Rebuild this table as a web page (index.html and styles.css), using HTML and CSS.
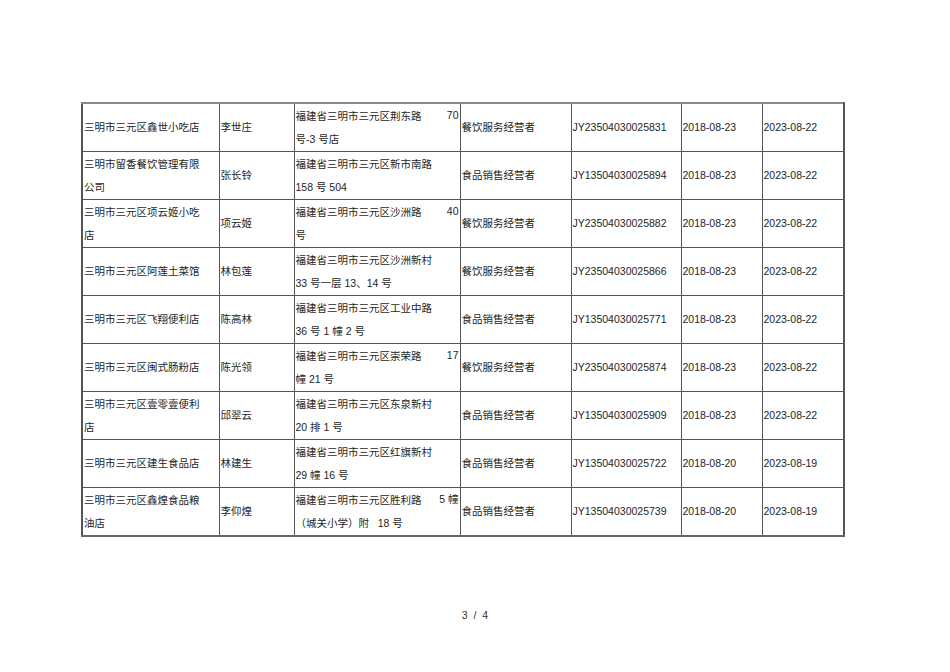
FILE: index.html
```html
<!DOCTYPE html>
<html lang="zh-CN">
<head>
<meta charset="utf-8">
<title>3 / 4</title>
<link rel="stylesheet" href="styles.css">
</head>
<body>
<div class="page">
  <table class="grid">
    <colgroup>
      <col class="c1"><col class="c2"><col class="c3"><col class="c4"><col class="c5"><col class="c6"><col class="c7">
    </colgroup>
    <tbody>
      <tr>
        <td>三明市三元区鑫世小吃店</td>
        <td>李世庄</td>
        <td class="addr"><div class="l1"><span>福建省三明市三元区荆东路</span><span class="num">70</span></div><div>号-3 号店</div></td>
        <td>餐饮服务经营者</td>
        <td>JY23504030025831</td>
        <td>2018-08-23</td>
        <td>2023-08-22</td>
      </tr>
      <tr>
        <td>三明市留香餐饮管理有限<br>公司</td>
        <td>张长铃</td>
        <td class="addr"><div class="l1"><span>福建省三明市三元区新市南路</span></div><div>158 号 504</div></td>
        <td>食品销售经营者</td>
        <td>JY13504030025894</td>
        <td>2018-08-23</td>
        <td>2023-08-22</td>
      </tr>
      <tr>
        <td>三明市三元区项云姬小吃<br>店</td>
        <td>项云姬</td>
        <td class="addr"><div class="l1"><span>福建省三明市三元区沙洲路</span><span class="num">40</span></div><div>号</div></td>
        <td>餐饮服务经营者</td>
        <td>JY23504030025882</td>
        <td>2018-08-23</td>
        <td>2023-08-22</td>
      </tr>
      <tr>
        <td>三明市三元区阿莲土菜馆</td>
        <td>林包莲</td>
        <td class="addr"><div class="l1"><span>福建省三明市三元区沙洲新村</span></div><div>33 号一层 13、14 号</div></td>
        <td>餐饮服务经营者</td>
        <td>JY23504030025866</td>
        <td>2018-08-23</td>
        <td>2023-08-22</td>
      </tr>
      <tr>
        <td>三明市三元区飞翔便利店</td>
        <td>陈高林</td>
        <td class="addr"><div class="l1"><span>福建省三明市三元区工业中路</span></div><div>36 号 1 幢 2 号</div></td>
        <td>食品销售经营者</td>
        <td>JY13504030025771</td>
        <td>2018-08-23</td>
        <td>2023-08-22</td>
      </tr>
      <tr>
        <td>三明市三元区闽式肠粉店</td>
        <td>陈光领</td>
        <td class="addr"><div class="l1"><span>福建省三明市三元区崇荣路</span><span class="num">17</span></div><div>幢 21 号</div></td>
        <td>餐饮服务经营者</td>
        <td>JY23504030025874</td>
        <td>2018-08-23</td>
        <td>2023-08-22</td>
      </tr>
      <tr>
        <td>三明市三元区壹零壹便利<br>店</td>
        <td>邱翠云</td>
        <td class="addr"><div class="l1"><span>福建省三明市三元区东泉新村</span></div><div>20 排 1 号</div></td>
        <td>食品销售经营者</td>
        <td>JY13504030025909</td>
        <td>2018-08-23</td>
        <td>2023-08-22</td>
      </tr>
      <tr>
        <td>三明市三元区建生食品店</td>
        <td>林建生</td>
        <td class="addr"><div class="l1"><span>福建省三明市三元区红旗新村</span></div><div>29 幢 16 号</div></td>
        <td>食品销售经营者</td>
        <td>JY13504030025722</td>
        <td>2018-08-20</td>
        <td>2023-08-19</td>
      </tr>
      <tr>
        <td>三明市三元区鑫煌食品粮<br>油店</td>
        <td>李仰煌</td>
        <td class="addr"><div class="l1"><span>福建省三明市三元区胜利路</span><span class="num">5 幢</span></div><div>（城关小学）附&nbsp;&nbsp;&nbsp;18 号</div></td>
        <td>食品销售经营者</td>
        <td>JY13504030025739</td>
        <td>2018-08-20</td>
        <td>2023-08-19</td>
      </tr>
    </tbody>
  </table>
  <div class="footer">3 &nbsp;/ &nbsp;4</div>
</div>
</body>
</html>
```
FILE: styles.css
```css
html, body {
  margin: 0;
  padding: 0;
  background: #ffffff;
}

.page {
  width: 950px;
  height: 672px;
  padding: 102px 0 0 81px;
  box-sizing: border-box;
  font-family: "Liberation Sans", "Noto Sans CJK SC", sans-serif;
  font-size: 10.5px;
  color: #1e1e1e;
}

.grid {
  border-collapse: collapse;
  table-layout: fixed;
  width: 762px;
}

.c1 { width: 137px; }
.c2 { width: 75px; }
.c3 { width: 166px; }
.c4 { width: 111px; }
.c5 { width: 110px; }
.c6 { width: 81px; }
.c7 { width: 82px; }

.grid td {
  border: 1px solid #555555;
  height: 47px;
  padding: 0 1px;
  line-height: 23px;
  vertical-align: middle;
  white-space: nowrap;
  overflow: hidden;
}

.grid tr:first-child td {
  border-top: 2px solid #8a8a8a;
}

.grid td:first-child {
  border-left: 2px solid #555555;
}

.grid td:last-child {
  border-right: 2px solid #555555;
}

.grid tr:last-child td {
  border-bottom: 2px solid #666666;
}

.addr .l1 {
  display: flex;
  justify-content: space-between;
  align-items: baseline;
}

.addr .num {
  line-height: 18px;
  align-self: flex-start;
  padding-top: 1px;
}

.footer {
  width: 950px;
  margin-left: -81px;
  padding-top: 72px;
  text-align: center;
  font-size: 10.5px;
  color: #333333;
  box-sizing: border-box;
}
```
